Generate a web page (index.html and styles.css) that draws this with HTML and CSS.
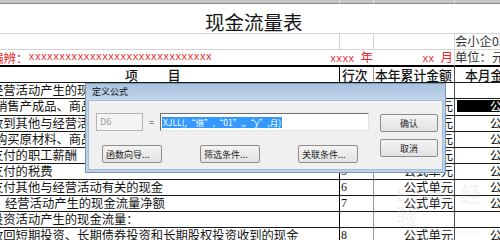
FILE: index.html
```html
<!DOCTYPE html>
<html lang="zh-CN">
<head>
    <meta charset="UTF-8">
    <title>现金流量表 - 定义公式</title>
    <link rel="stylesheet" href="styles.css">
</head>
<body>
    <div class="sheet">
        <!-- strip of the row above -->
        <div class="row strip">
            <div class="cell"></div><div class="cell"></div><div class="cell"></div><div class="cell"></div>
        </div>

        <!-- title -->
        <div class="title-row">现金流量表</div>

        <div class="row info">
            <div class="cell"></div><div class="cell"></div><div class="cell"></div>
            <div class="cell note">会小企03表</div>
        </div>

        <div class="row info last">
            <div class="cell merged">
                <span class="red label">编辨：</span>
                <span class="red xs">xxxxxxxxxxxxxxxxxxxxxxxxxxxxxx</span>
                <span class="red date">xxxx <b>年</b></span>
            </div>
            <div class="cell month"><span class="red date">xx <b>月</b></span></div>
            <div class="cell note">单位：元</div>
        </div>

        <!-- column heads -->
        <div class="row head">
            <div class="cell item-head"><span>项</span><span>目</span></div>
            <div class="cell no">行次</div>
            <div class="cell amt-head">本年累计金额</div>
            <div class="cell month-head">本月金额</div>
        </div>

        <div class="row data">
            <div class="cell item">经营活动产生的现金流量：</div>
            <div class="cell no"></div><div class="cell amt"></div><div class="cell amt"></div>
        </div>
        <div class="row data tall">
            <div class="cell item near">销售产成品、商品、提供劳务收到的现金</div>
            <div class="cell no">1</div><div class="cell amt">公式单元</div>
            <div class="cell amt picked"><span>公式单元</span></div>
        </div>
        <div class="row data">
            <div class="cell item">收到其他与经营活动有关的现金</div>
            <div class="cell no">2</div><div class="cell amt">公式单元</div><div class="cell amt">公式单元</div>
        </div>
        <div class="row data">
            <div class="cell item near">购买原材料、商品、接受劳务支付的现金</div>
            <div class="cell no">3</div><div class="cell amt">公式单元</div><div class="cell amt">公式单元</div>
        </div>
        <div class="row data">
            <div class="cell item">支付的职工薪酬</div>
            <div class="cell no">4</div><div class="cell amt">公式单元</div><div class="cell amt">公式单元</div>
        </div>
        <div class="row data">
            <div class="cell item">支付的税费</div>
            <div class="cell no">5</div><div class="cell amt">公式单元</div><div class="cell amt">公式单元</div>
        </div>
        <div class="row data">
            <div class="cell item">支付其他与经营活动有关的现金</div>
            <div class="cell no">6</div><div class="cell amt">公式单元</div><div class="cell amt">公式单元</div>
        </div>
        <div class="row data">
            <div class="cell item sub">经营活动产生的现金流量净额</div>
            <div class="cell no">7</div><div class="cell amt">公式单元</div><div class="cell amt">公式单元</div>
        </div>
        <div class="row data">
            <div class="cell item">投资活动产生的现金流量：</div>
            <div class="cell no"></div><div class="cell amt"></div><div class="cell amt"></div>
        </div>
        <div class="row data">
            <div class="cell item">收回短期投资、长期债券投资和长期股权投资收到的现金</div>
            <div class="cell no">8</div><div class="cell amt">公式单元</div><div class="cell amt">公式单元</div>
        </div>
    </div>

    <!-- faint site watermark -->
    <div class="watermark">
        <div class="wm-big">Baidu 经验</div>
        <div class="wm-small">jingyan.baidu.com</div>
    </div>

    <!-- formula dialog -->
    <div class="dialog">
        <div class="dlg-title">定义公式</div>
        <div class="dlg-body">
            <div class="dlg-main">
                <div class="dlg-line">
                    <div class="field ref">D6</div>
                    <span class="eq">=</span>
                    <div class="field formula"><span class="selected">XJLL(,“借”,“01”,,“y”,月)</span></div>
                </div>
                <div class="dlg-buttons">
                    <button class="btn wide">函数向导...</button>
                    <button class="btn wide">筛选条件...</button>
                    <button class="btn wide">关联条件...</button>
                </div>
            </div>
            <div class="dlg-side">
                <button class="btn">确认</button>
                <button class="btn">取消</button>
            </div>
        </div>
    </div>
</body>
</html>
```

FILE: styles.css
```css
* {
    box-sizing: border-box;
}
body {
    margin: 0;
    width: 500px;
    height: 240px;
    overflow: hidden;
    position: relative;
    background-color: #FFFFFF;
    color: #141414;
    font-family: "Noto Sans CJK SC", sans-serif;
}
.sheet {
    width: 541px;
}
.row {
    display: grid;
    grid-template-columns: 340px 34px 81px 86px;
}
.cell {
    overflow: hidden;
    white-space: nowrap;
    border-right: 1px solid #D4D4D4;
    border-bottom: 1px solid #D4D4D4;
    font-size: 12.3px;
    line-height: 15px;
}

/* top strip */
.strip {
    height: 4px;
    background-color: #C4C4C4;
}
.strip .cell {
    border-right-color: #E2E2E2;
    border-bottom-color: #8A8A8A;
}

.title-row {
    height: 30px;
    padding: 8px 0 0 205px;
    font-size: 19.5px;
    line-height: 20px;
    border-bottom: 1px solid #D4D4D4;
}

/* info rows */
.info {
    height: 16px;
}
.note {
    color: #333333;
}
.info.last {
    grid-template-columns: 374px 81px 86px;
    height: 17px;
}
.info.last .cell {
    border-bottom: 2px solid #000000;
    line-height: 15px;
}
.merged {
    display: flex;
    align-items: center;
    border-right: none !important;
}
.month {
    display: flex;
    justify-content: flex-end;
    align-items: center;
    padding-right: 1px;
}
.red {
    color: #E8262B;
}
.label {
    margin-left: -9px;
    font-size: 12.5px;
}
.xs, .date {
    font-family: "Liberation Mono", monospace;
    font-size: 10.2px;
}
.date b {
    font-weight: normal;
    font-family: "Noto Sans CJK SC", sans-serif;
    font-size: 12.5px;
}
.merged .date {
    margin-left: auto;
    padding-right: 1px;
}

/* heads */
.head {
    height: 16px;
}
.head .cell {
    font-size: 12.8px;
    line-height: 15px;
    font-weight: 500;
}
.item-head {
    display: flex;
    gap: 30px;
    padding-left: 125px;
}
.amt-head {
    padding-left: 1px;
}
.month-head {
    padding-left: 10px;
}

/* data rows */
.data {
    height: 16px;
}
.data.tall {
    height: 17px;
}
.data .cell, .head .cell {
    border-bottom-color: #1A1A1A;
}
.item, .head .item-head {
    border-right-color: #000000 !important;
}
.no {
    border-right-color: #9A9A9A !important;
    padding-left: 1px;
    font-family: "Liberation Serif", serif;
    font-size: 12px;
    color: #141414;
}
.head .no {
    font-family: "Noto Sans CJK SC", sans-serif;
    font-size: 12.8px;
    padding-left: 2px;
}
.amt {
    text-align: right;
    padding-right: 1px;
}
.data .amt:nth-child(3), .head .amt-head {
    border-right-color: #4A4A4A;
}
.item {
    text-indent: -9px;
}
.item.near {
    text-indent: -5px;
}
.item.sub {
    text-indent: 5px;
}
.picked {
    padding: 1px 1px 3px 2px;
}
.picked span {
    display: block;
    height: 100%;
    background-color: #000000;
    color: #FFFFFF;
    line-height: 13px;
}

/* watermark */
.watermark {
    position: absolute;
    left: 396px;
    top: 184px;
    color: rgba(205, 205, 205, 0.22);
    font-family: "Liberation Sans", "Noto Sans CJK SC", sans-serif;
}
.wm-big {
    font-size: 21px;
    font-weight: bold;
    line-height: 22px;
}
.wm-small {
    font-size: 9px;
    line-height: 10px;
    padding-left: 10px;
}

/* dialog */
.dialog {
    position: absolute;
    left: 85px;
    top: 83px;
    width: 361px;
    height: 90px;
    border: 1px solid #7C98B8;
    background-color: #B9D1EA;
    padding: 0 2px 2px 2px;
    display: flex;
    flex-direction: column;
    font-size: 9px;
}
.dlg-title {
    height: 16px;
    margin: 0 -2px;
    padding: 3px 0 0 6px;
    line-height: 10px;
    color: #111111;
    background: linear-gradient(to bottom, #A9C2DE, #C2D6EC);
}
.dlg-body {
    flex: 1;
    display: flex;
    background-color: #F0F0F0;
    border: 1px solid #A8BCD3;
    padding: 12px 0 0 7px;
}
.dlg-main {
    width: 273px;
}
.dlg-line {
    display: flex;
    align-items: center;
    height: 18px;
}
.field {
    height: 18px;
    border: 1px solid #ABADB3;
    border-top-color: #8A8A8A;
}
.ref {
    width: 47px;
    background-color: #F4F4F4;
    color: #9A9A9A;
    padding: 3px 0 0 3px;
    line-height: 10px;
    border-color: #B5B5B5;
}
.eq {
    width: 17px;
    text-align: center;
    color: #333333;
}
.formula {
    width: 209px;
    background-color: #FFFFFF;
    border-color: #6E6E6E #E3E3E3 #E3E3E3 #6E6E6E;
    padding: 2px 0 0 1px;
}
.selected {
    display: inline-block;
    background-color: #3399FF;
    color: #FFFFFF;
    font-size: 8.5px;
    line-height: 11px;
    padding: 0 1px;
}
.dlg-buttons {
    display: flex;
    gap: 38px;
    padding-left: 6px;
    margin-top: 14px;
}
.dlg-side {
    display: flex;
    flex-direction: column;
    gap: 7px;
    margin-left: 11px;
    padding-top: 1px;
}
.btn {
    width: 58px;
    height: 18px;
    padding: 0;
    font-family: "Noto Sans CJK SC", sans-serif;
    font-size: 9px;
    color: #1E1E1E;
    background: linear-gradient(to bottom, #F4F4F4, #E2E2E2);
    border: 1px solid #8C8C8C;
    border-radius: 2px;
}
.btn.wide {
    width: 60px;
    text-align: left;
    padding-left: 3px;
}
```
